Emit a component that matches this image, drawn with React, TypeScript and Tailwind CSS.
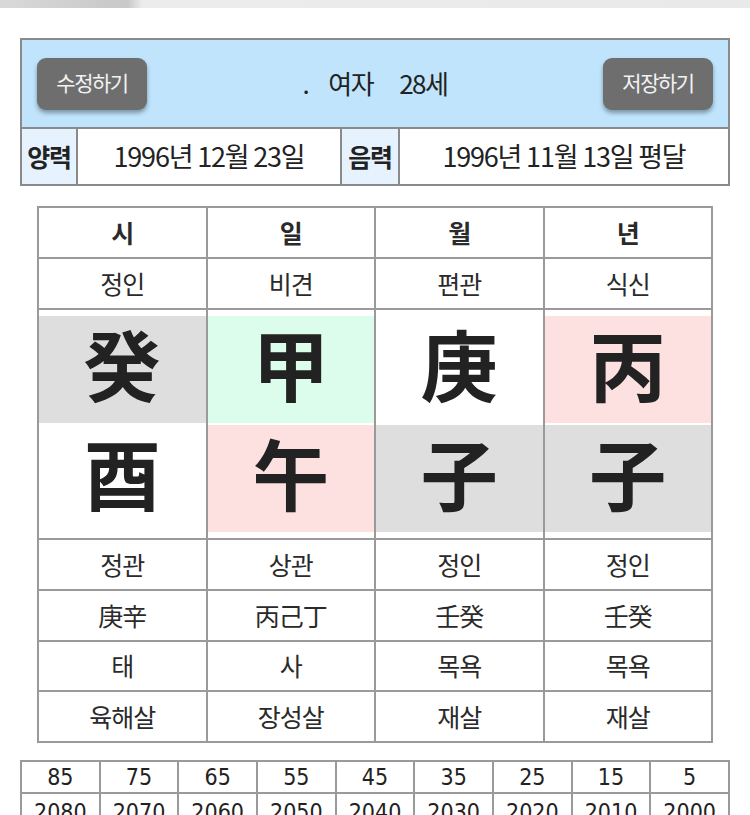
import React from "react";

const kr = { fontFamily: "'Noto Sans CJK KR', 'Noto Sans', sans-serif" };

const cols = ["시", "일", "월", "년"];
const row2 = ["정인", "비견", "편관", "식신"];
const top = [
  { c: "癸", bg: "bg-[#dedede]" },
  { c: "甲", bg: "bg-[#dcfcec]" },
  { c: "庚", bg: "bg-white" },
  { c: "丙", bg: "bg-[#fde0e0]" },
];
const bottom = [
  { c: "酉", bg: "bg-white" },
  { c: "午", bg: "bg-[#fde0e0]" },
  { c: "子", bg: "bg-[#dedede]" },
  { c: "子", bg: "bg-[#dedede]" },
];
const rows = [
  ["정관", "상관", "정인", "정인"],
  ["庚辛", "丙己丁", "壬癸", "壬癸"],
  ["태", "사", "목욕", "목욕"],
  ["육해살", "장성살", "재살", "재살"],
];
const ages = ["85", "75", "65", "55", "45", "35", "25", "15", "5"];
const years = ["2080", "2070", "2060", "2050", "2040", "2030", "2020", "2010", "2000"];

export default function App() {
  return (
    <div className="w-[750px] h-[815px] overflow-hidden bg-white text-[#222]" style={kr}>
      <div className="h-[8px] bg-[linear-gradient(90deg,#d9d9d9_0%,#c8c8c8_17%,#ececec_19%,#e9e9e9_100%)]" />

      {/* Info box */}
      <div className="mx-[20px] mt-[30px] w-[710px] border-2 border-[#8a8a8a]">
        <div className="h-[87px] bg-[#bfe4fc] flex items-center justify-between px-[15px]">
          <div className="w-[110px] h-[52px] rounded-[9px] bg-[#6e6e6e] shadow-[0_3px_4px_rgba(0,0,0,0.35)] flex items-center justify-center text-[#f2f2f2] text-[21px] tracking-[-1.5px] pb-[2px]">
            수정하기
          </div>
          <div className="flex items-center text-[26px] text-[#222] tracking-[-1.5px] pb-[2px]">
            <span className="mr-[20px]">.</span>
            <span className="mr-[26px]">여자</span>
            <span>28세</span>
          </div>
          <div className="w-[110px] h-[52px] rounded-[9px] bg-[#6e6e6e] shadow-[0_3px_4px_rgba(0,0,0,0.35)] flex items-center justify-center text-[#f2f2f2] text-[21px] tracking-[-1.5px] pb-[2px]">
            저장하기
          </div>
        </div>
        <div className="h-[57px] border-t-2 border-[#8a8a8a] grid grid-cols-[56px_264px_58px_1fr] text-[27px] tracking-[-1.2px]">
          <div className="bg-[#e6f3fe] flex items-center justify-center font-bold border-r-2 border-[#8a8a8a] text-[25px]">양력</div>
          <div className="bg-white flex items-center justify-center border-r-2 border-[#8a8a8a]">1996년 12월 23일</div>
          <div className="bg-[#e6f3fe] flex items-center justify-center font-bold border-r-2 border-[#8a8a8a] text-[25px]">음력</div>
          <div className="bg-white flex items-center justify-center">1996년 11월 13일 평달</div>
        </div>
      </div>

      {/* Saju table */}
      <div className="ml-[37px] mt-[20px] w-[676px] border-l-2 border-t-2 border-[#9a9a9a] grid grid-cols-4 text-[25px] tracking-[-1px] text-[#2a2a2a]">
        {cols.map((c) => (
          <div key={c} className="h-[51px] border-r-2 border-b-2 border-[#9a9a9a] flex items-center justify-center font-bold text-[25px]">
            {c}
          </div>
        ))}
        {row2.map((c, i) => (
          <div key={"r2" + i} className="h-[51px] border-r-2 border-b-2 border-[#9a9a9a] flex items-center justify-center">
            {c}
          </div>
        ))}
        {top.map((t, i) => (
          <div key={"big" + i} className="h-[230px] border-r-2 border-b-2 border-[#9a9a9a] pt-[6px] pb-[6px] flex flex-col gap-[2px]">
            <div className={`h-[107px] ${t.bg} flex items-center justify-center text-[77px] font-bold leading-none text-[#222] pb-[14px] tracking-normal`}>
              {t.c}
            </div>
            <div className={`h-[107px] ${bottom[i].bg} flex items-center justify-center text-[77px] font-bold leading-none text-[#222] pb-[14px] tracking-normal`}>
              {bottom[i].c}
            </div>
          </div>
        ))}
        {rows.map((r, ri) =>
          r.map((c, i) => (
            <div key={"r" + ri + "-" + i} className={`${ri === 2 ? "h-[50px]" : "h-[51px]"} border-r-2 border-b-2 border-[#9a9a9a] flex items-center justify-center`}>
              {c}
            </div>
          ))
        )}
      </div>

      {/* Daewoon table */}
      <div
        className="ml-[20px] mt-[17px] w-[710px] border-l-2 border-t-2 border-[#9a9a9a] grid grid-cols-9 text-[23px] text-[#222]"
        style={{ fontFamily: "'DejaVu Sans Condensed', 'DejaVu Sans', sans-serif" }}
      >
        {ages.map((a) => (
          <div key={a} className="h-[32px] border-r-2 border-b-2 border-[#9a9a9a] flex items-center justify-center">
            {a}
          </div>
        ))}
        {years.map((y) => (
          <div key={y} className="h-[32px] border-r-2 border-b-2 border-[#9a9a9a] flex items-start justify-center pt-[1px]">
            {y}
          </div>
        ))}
      </div>
    </div>
  );
}
